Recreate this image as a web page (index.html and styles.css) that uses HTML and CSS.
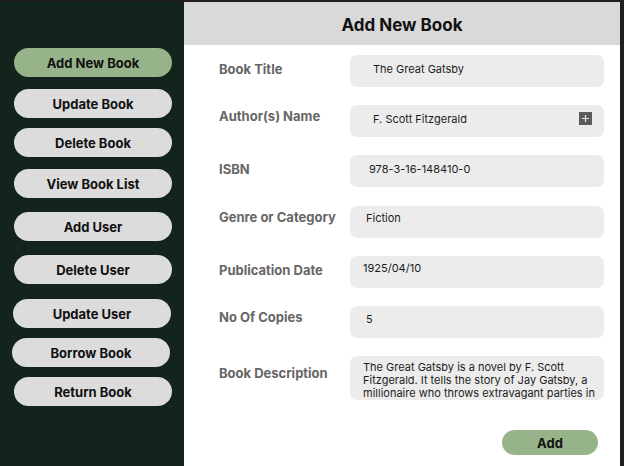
FILE: index.html
```html
<!DOCTYPE html>
<html>
<head>
<meta charset="utf-8">
<link rel="stylesheet" href="styles.css">
</head>
<body>
<div class="app">
  <nav class="sidebar">
    <button class="nav-btn active">Add New Book</button>
    <button class="nav-btn">Update Book</button>
    <button class="nav-btn">Delete Book</button>
    <button class="nav-btn">View Book List</button>
    <button class="nav-btn">Add User</button>
    <button class="nav-btn">Delete User</button>
    <button class="nav-btn">Update User</button>
    <button class="nav-btn">Borrow Book</button>
    <button class="nav-btn">Return Book</button>
  </nav>
  <main class="main">
    <header class="header">Add New Book</header>
    <form class="form">
      <label class="label">Book Title</label>
      <div class="field field-wide">The Great Gatsby</div>

      <label class="label label-up">Author(s) Name</label>
      <div class="field field-icon">
        <span>F. Scott Fitzgerald</span>
        <span class="plus"><svg width="13" height="13" viewBox="0 0 13 13"><rect width="13" height="13" fill="#5b5b5b"/><path d="M6.5 3v7M3 6.5h7" stroke="#e6e6e6" stroke-width="1.2"/></svg></span>
      </div>

      <label class="label">ISBN</label>
      <div class="field">978-3-16-148410-0</div>

      <label class="label label-up">Genre or Category</label>
      <div class="field field-high">Fiction</div>

      <label class="label">Publication Date</label>
      <div class="field field-high field-narrow">1925/04/10</div>

      <label class="label label-up">No Of Copies</label>
      <div class="field field-mid">5</div>

      <label class="label label-down">Book Description</label>
      <div class="field field-area">The Great Gatsby is a novel by F. Scott Fitzgerald. It tells the story of Jay Gatsby, a millionaire who throws extravagant parties in</div>
    </form>
    <div class="actions">
      <button class="add-btn">Add</button>
    </div>
  </main>
</div>
</body>
</html>
```

FILE: styles.css
```css
* {
  box-sizing: border-box;
}

html, body {
  margin: 0;
  padding: 0;
}

body {
  background: #1f1f1f;
  font-family: Inter, "Noto Sans", sans-serif;
  width: 624px;
  height: 466px;
  overflow: hidden;
}

.app {
  display: flex;
  height: 464px;
  margin-top: 2px;
  margin-right: 4px;
}

.sidebar {
  width: 184px;
  flex: 0 0 184px;
  background: #12241c;
  display: flex;
  flex-direction: column;
  padding: 46px 12px 0 14px;
}

.nav-btn {
  width: 158px;
  height: 29px;
  border: none;
  border-radius: 15px;
  background: #dcdcdc;
  color: #111;
  font-family: Inter, "Noto Sans", sans-serif;
  font-weight: 700;
  font-size: 13px;
  padding: 0;
  flex: 0 0 auto;
}

.nav-btn.active {
  background: #97b38a;
}

.nav-btn:nth-child(2) { margin-top: 12px; }
.nav-btn:nth-child(3) { margin-top: 10px; }
.nav-btn:nth-child(4) { margin-top: 12px; }
.nav-btn:nth-child(5) { margin-top: 14px; }
.nav-btn:nth-child(6) { margin-top: 14px; }
.nav-btn:nth-child(7) { margin-top: 15px; margin-left: -1px; }
.nav-btn:nth-child(8) { margin-top: 10px; margin-left: -2px; }
.nav-btn:nth-child(9) { margin-top: 10px; }

.main {
  flex: 1;
  background: #ffffff;
  display: flex;
  flex-direction: column;
}

.header {
  height: 43px;
  background: #d9d9d9;
  display: flex;
  align-items: center;
  justify-content: center;
  padding-top: 2px;
  font-weight: 700;
  font-size: 17px;
  color: #111;
}

.form {
  display: grid;
  grid-template-columns: 131px 254px;
  row-gap: 18px;
  padding: 10px 16px 0 35px;
  align-items: start;
}

.form > .label:nth-of-type(4),
.form > .label:nth-of-type(4) + .field {
  margin-top: 1px;
}

.label {
  font-weight: 700;
  font-size: 13px;
  line-height: 16px;
  color: #666666;
  padding-top: 6px;
}

.label-up {
  padding-top: 3px;
}

.label-down {
  padding-top: 9px;
}

.field {
  height: 32px;
  background: #ececec;
  border-radius: 7px;
  font-size: 11px;
  line-height: 14px;
  color: #1c1c1c;
  padding: 7px 12px 0 19px;
}

.field-wide {
  padding-left: 23px;
}

.field-high {
  padding-top: 5px;
  padding-left: 16px;
}

.field-narrow {
  padding-left: 13px;
}

.field-mid {
  padding-left: 16px;
  padding-top: 6px;
}

.field-icon {
  display: flex;
  justify-content: space-between;
  align-items: flex-start;
  padding-left: 23px;
  padding-right: 12px;
}

.plus {
  display: block;
  width: 13px;
  height: 13px;
}

.plus svg {
  display: block;
}

.field-area {
  height: 44px;
  overflow: hidden;
  padding: 5px 4px 0 13px;
  line-height: 13px;
}

.actions {
  display: flex;
  justify-content: flex-end;
  padding: 30px 22px 0 0;
}

.add-btn {
  width: 96px;
  height: 25px;
  border: none;
  border-radius: 13px;
  background: #97b38a;
  color: #111;
  font-family: Inter, "Noto Sans", sans-serif;
  font-weight: 700;
  font-size: 13px;
  padding: 0;
}
```
